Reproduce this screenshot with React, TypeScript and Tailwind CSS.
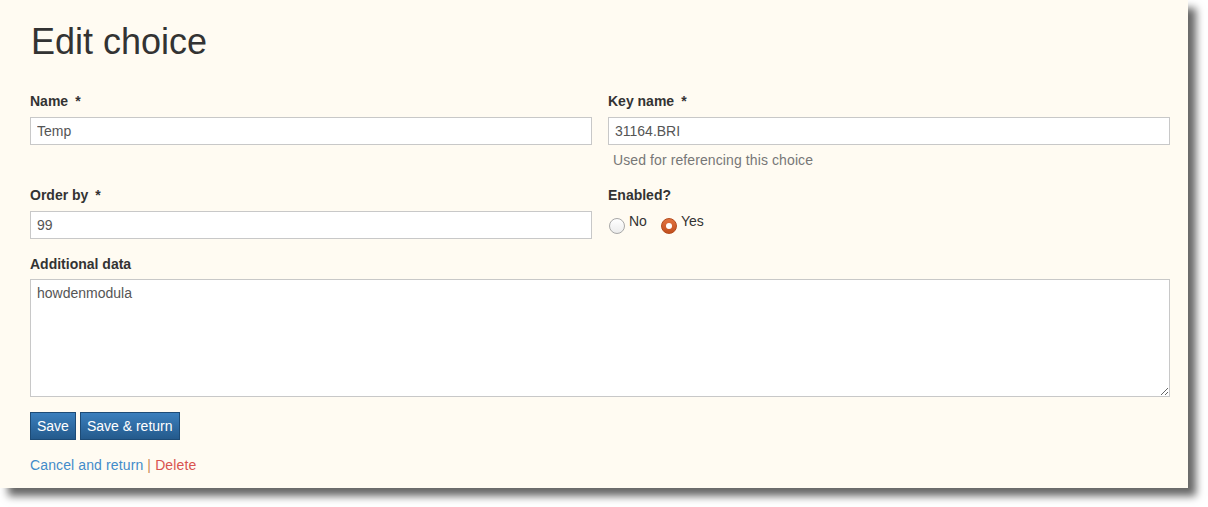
import React from "react";

const Label = ({ text, required }: { text: string; required?: boolean }) => (
  <label className="block text-[14px] leading-[20px] font-bold text-[#333] mb-[6px]">
    {text}
    {required && <span className="ml-[7px]">*</span>}
  </label>
);

const inputCls =
  "block w-full h-[28px] border border-[#c8c8c8] bg-white px-[6px] text-[14px] text-[#555] outline-none";

const Radio = ({ label, checked }: { label: string; checked?: boolean }) => (
  <label className="flex items-start mr-[14px]">
    {checked ? (
      <span className="mt-[7px] w-[16px] h-[16px] rounded-full border border-[#b34a1c] bg-gradient-to-b from-[#e2733f] to-[#c24f1d] flex items-center justify-center">
        <span className="w-[6px] h-[6px] rounded-full bg-white" />
      </span>
    ) : (
      <span className="mt-[7px] w-[16px] h-[16px] rounded-full border border-[#a8a8a8] bg-gradient-to-b from-white to-[#ececec]" />
    )}
    <span className="ml-[4px] text-[14px] leading-[20px] text-[#333]">{label}</span>
  </label>
);

export default function App() {
  return (
    <div className="w-[1208px] h-[507px] bg-white" style={{ fontFamily: '"Liberation Sans", Arial, sans-serif' }}>
      <div className="w-[1188px] bg-[#fffbf2] shadow-[8px_8px_8px_rgba(0,0,0,0.6)] pl-[30px] pr-[18px] pt-[22px] pb-[13px]">
        <h1 className="text-[36px] leading-[40px] text-[#333] ml-[1px]">Edit choice</h1>

        <div className="grid grid-cols-2 gap-x-[16px] mt-[29px]">
          <div>
            <Label text="Name" required />
            <input className={inputCls} defaultValue="Temp" />
          </div>
          <div>
            <Label text="Key name" required />
            <input className={inputCls} defaultValue="31164.BRI" />
            <p className="text-[14px] leading-[20px] text-[#777] tracking-[0.1px] ml-[5px] mt-[5px]">
              Used for referencing this choice
            </p>
          </div>

          <div className="mt-[15px]">
            <Label text="Order by" required />
            <input className={inputCls} defaultValue="99" />
          </div>
          <div className="mt-[15px]">
            <Label text="Enabled?" />
            <div className="flex mt-[1px] ml-[1px]">
              <Radio label="No" />
              <Radio label="Yes" checked />
            </div>
          </div>
        </div>

        <div className="mt-[15px]">
          <Label text="Additional data" />
          <textarea
            className="block w-full h-[118px] -mt-[1px] border border-[#c8c8c8] bg-white px-[6px] py-[3px] text-[14px] leading-[20px] text-[#555] outline-none"
            defaultValue="howdenmodula"
          />
        </div>

        <div className="flex gap-[4px] mt-[15px]">
          <button className="h-[28px] px-[6px] border border-[#1d4b76] bg-gradient-to-b from-[#3b7fbd] to-[#245a8c] text-white text-[14px]">
            Save
          </button>
          <button className="h-[28px] px-[6px] border border-[#1d4b76] bg-gradient-to-b from-[#3b7fbd] to-[#245a8c] text-white text-[14px]">
            Save &amp; return
          </button>
        </div>

        <p className="mt-[15px] text-[14px] leading-[20px] tracking-[0.12px]">
          <a className="text-[#428bca]">Cancel and return</a>
          <span className="text-[#c98a54]"> | </span>
          <a className="text-[#d9534f]">Delete</a>
        </p>
      </div>
    </div>
  );
}
